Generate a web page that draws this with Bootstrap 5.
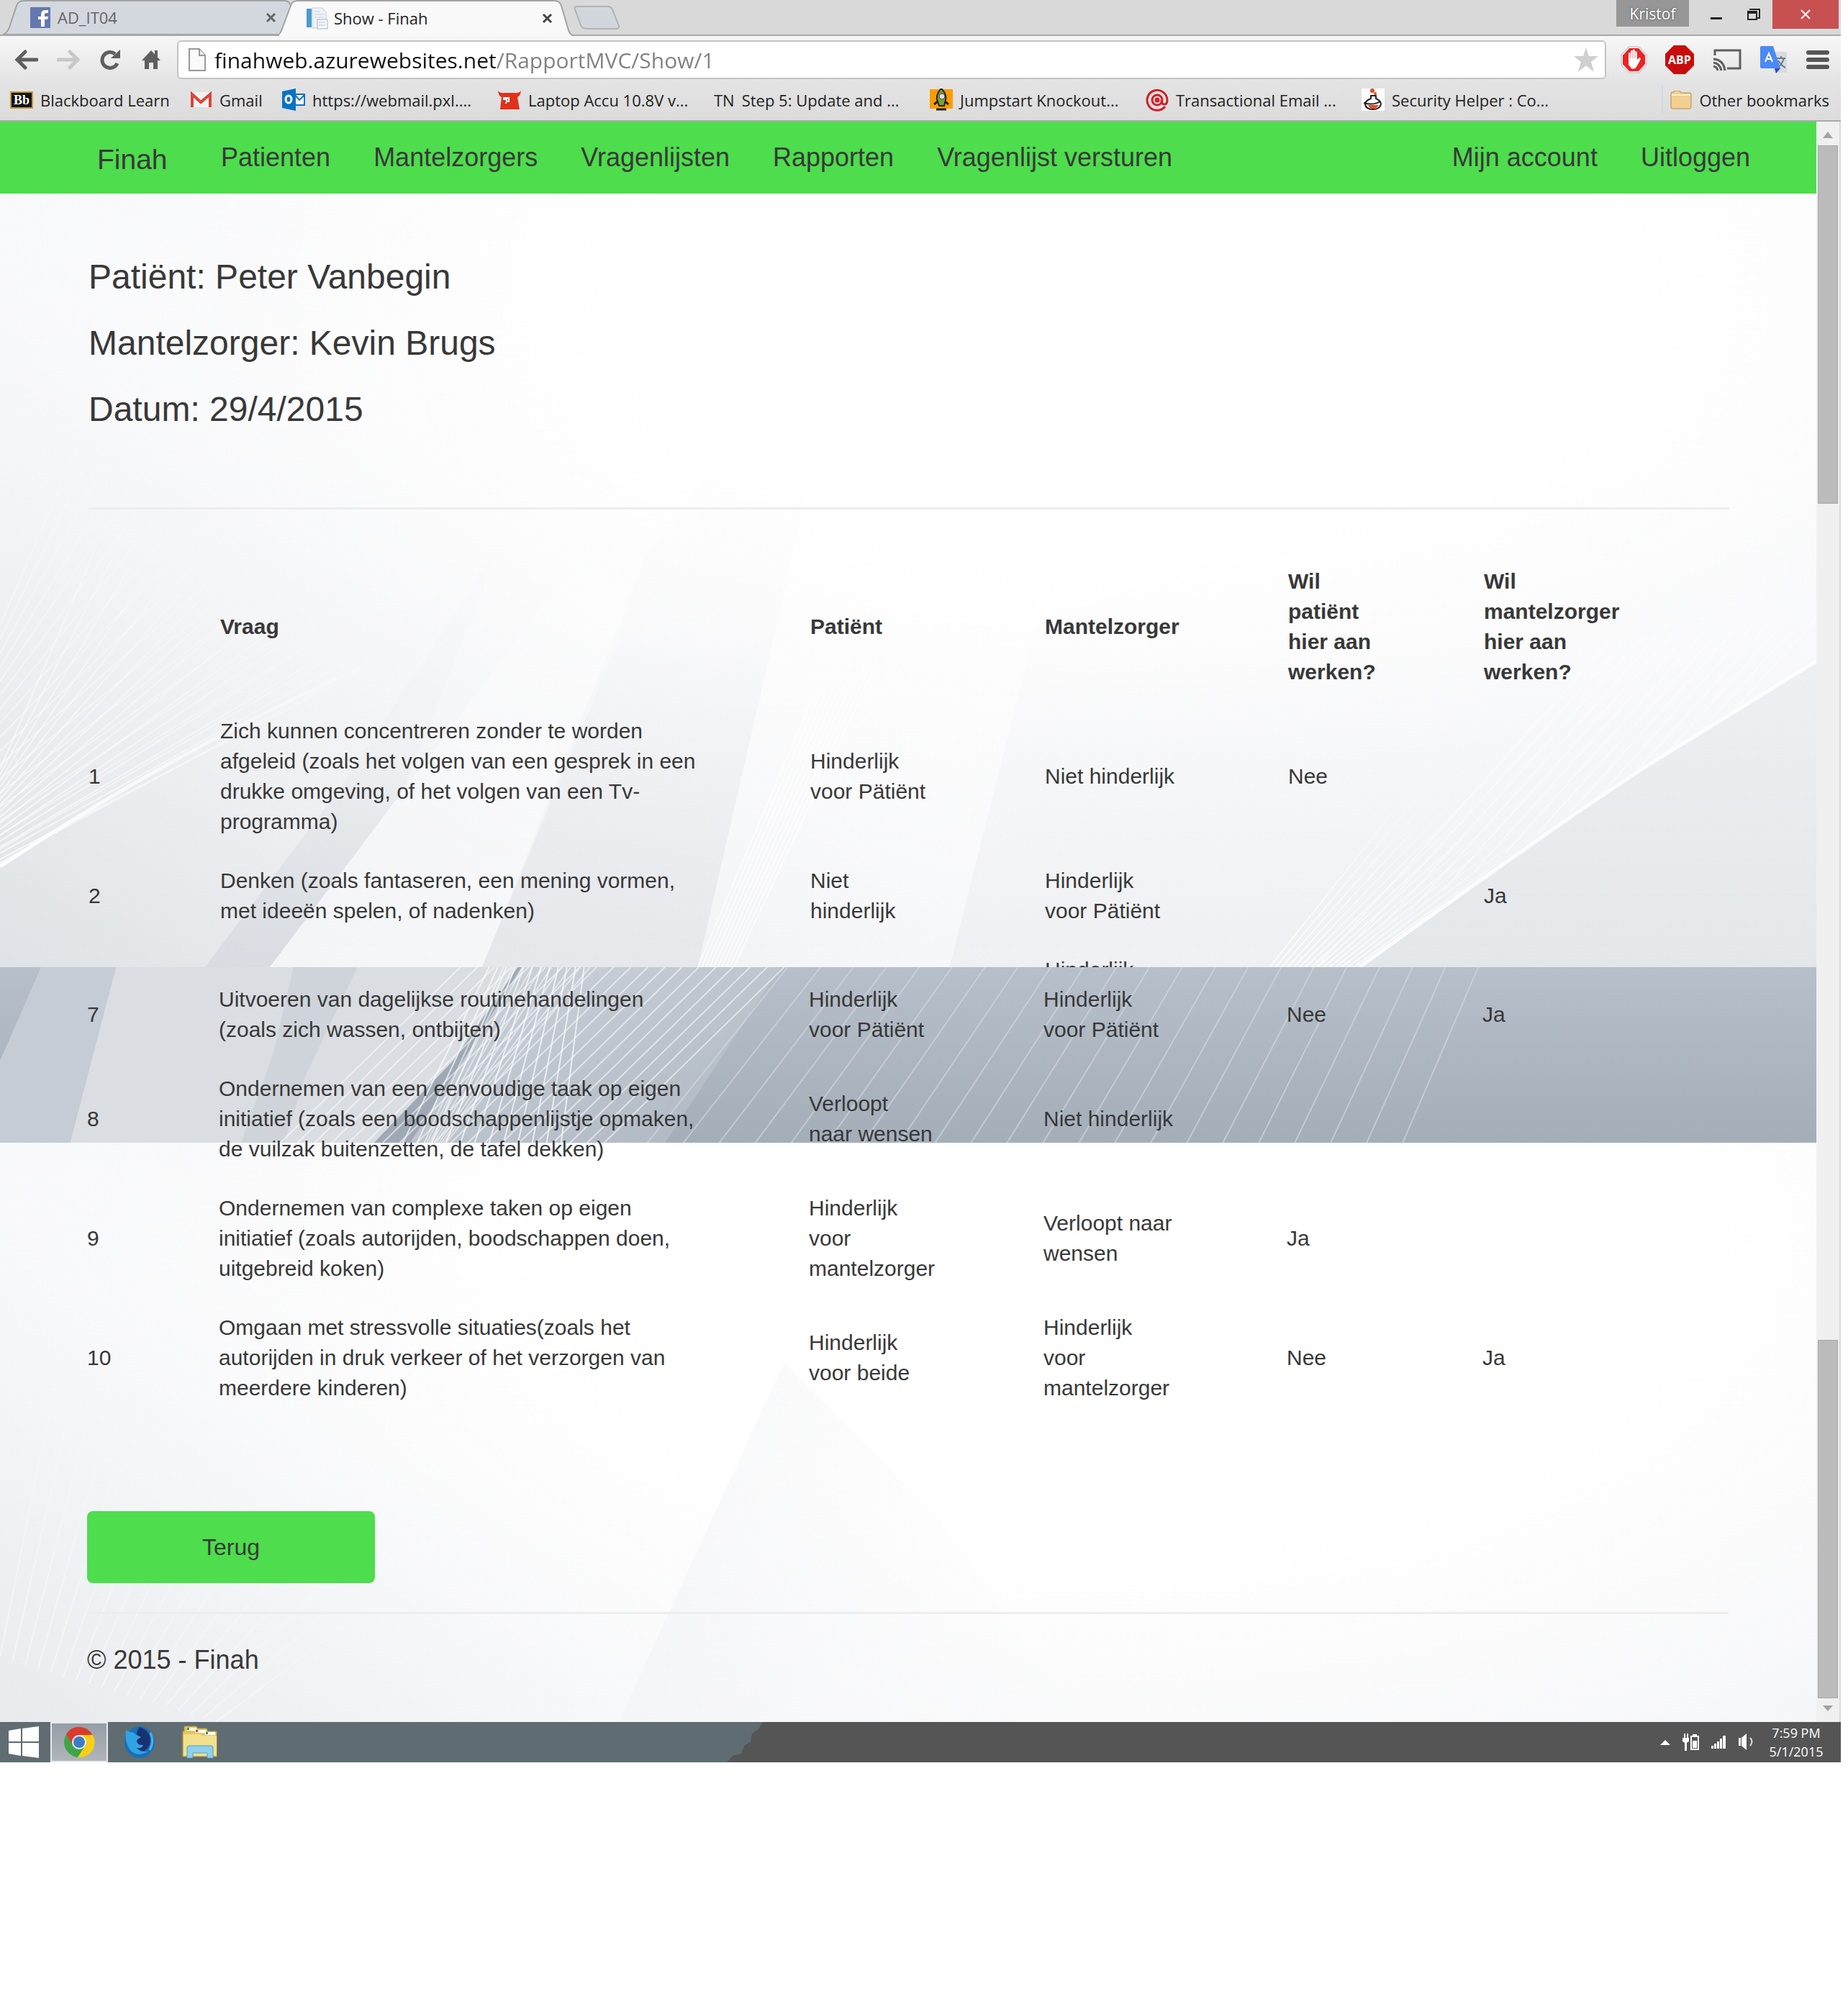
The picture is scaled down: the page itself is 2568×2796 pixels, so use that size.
<!DOCTYPE html>
<html lang="nl">
<head>
<meta charset="utf-8">
<meta name="viewport" content="width=device-width, initial-scale=1">
<title>Show - Finah</title>
<link href="https://cdn.jsdelivr.net/npm/bootstrap@5.3.0/dist/css/bootstrap.min.css" rel="stylesheet">
<style>
:root{--green:#4ddd4d;--ink:#383838;--ui:"Open Sans","Noto Sans",sans-serif}
body{background:#fff;color:var(--ink);font-family:"Liberation Sans",Arial,sans-serif;font-size:30px;line-height:42px;padding-right:10px}
svg{display:block;flex:none}
a{color:inherit;text-decoration:none}
.ui-font{font-family:var(--ui)}
.plain-btn{background:none;border:0;padding:0;color:inherit;line-height:0}

.tab-strip{height:50px;background:#d9d9d9;border-bottom:2px solid #a9a9a9;padding:0 3px 0 4px}
.win-tab{width:408px;height:48px;font-size:22px;line-height:46px;padding:0 28px 0 38px;gap:10px;color:#666}
.win-tab.current{margin-left:-24px;color:#222;height:50px;gap:8px;z-index:2}
.tab-shape{position:absolute;inset:0;width:100%;height:100%;z-index:-1}
.profile-tag{background:#979797;color:#fff;font-size:21px;line-height:34px;height:37px;width:101px;text-shadow:0 0 3px #444}
.win-close{width:92px;height:40px;background:#c75050}

.tool-row{background:linear-gradient(#f7f7f7,#e3e3e3);height:66px;padding:0 16px 0 20px}
.tool-left{width:226px;gap:26px}
.tool-right{width:310px;padding-left:20px}
.omnibox{height:54px;background:#fff;border:2px solid #c3c3c3;border-radius:6px;padding:0 8px 0 14px;gap:12px}
.omnibox input{border:0;outline:0;min-width:0;font-size:30px;line-height:44px;height:48px;padding:0;color:transparent;background:linear-gradient(90deg,#111 391px,#808080 391px);-webkit-background-clip:text;background-clip:text;-webkit-text-fill-color:transparent}
.book-row{background:linear-gradient(#e3e3e3,#dcdcdc);height:53px;border-bottom:2px solid #aaa;padding:0 16px 6px 14px;font-size:22px;line-height:40px;color:#222}
.bookmark{gap:10px;white-space:nowrap;width:300px}
.bookmark.w-first{width:250px}.bookmark.w-short{width:128px}
.other-marks{border-left:2px solid #cfdbe6;padding-left:10px;gap:10px;white-space:nowrap}

.site-nav{background:var(--green);height:100px;padding:0 92px 0 135px;font-size:36px}
.site-nav .brand-name{font-size:39px;width:112px;margin-right:60px;padding-top:6px}
.site-nav ul{gap:60px}
.panel-top{padding-left:123px;padding-right:121px;background:radial-gradient(ellipse 68% 90% at 62% 12%,#fff 40%,#f6f7f9 100%)}
.panel-end{padding:4px 122px 60px 121px;background:radial-gradient(ellipse 70% 90% at 62% 36%,#fff 45%,#f4f5f7 100%)}
.art{position:absolute;left:0;top:0;width:100%;z-index:0}
.panel-top>.art{height:100%}
.panel-end>.art{height:100%}
.panel-end>.dusk{height:244px}
.front{position:relative;z-index:1}
.facts{padding-top:90px}
.facts h2{font-size:48px;line-height:52px;font-weight:400;margin:0 0 40px}
.soft-line{height:3px;background:#ededee;border:0;opacity:1;margin:0}
.facts+.soft-line{margin:110px 0 59px}
.answers{table-layout:fixed;width:100%;border-collapse:collapse}
.answers th,.answers td{padding:20px 148px 20px 0;vertical-align:middle;text-align:left}
.answers .num{width:183px;padding-right:0}
.answers .c-ask{width:820px}.answers .c-pat{width:326px}.answers .c-man{width:338px}.answers .c-wil{width:272px}
.clip{max-height:577px;overflow:hidden}
.btn-back{background:var(--green);color:var(--ink);width:400px;height:100px;font-size:32px;border-radius:8px;border:0;margin:130px 0 40px}
.btn-back:hover{background:#3fcf3f}
.foot{font-size:36px;line-height:52px;margin-top:38px}
.scroll-rail{flex:none;width:34px;background:#f0f0f0;border-right:2px solid #dadada;padding:14px 0;gap:9px}
.thumb{width:28px;height:498px;background:#bbb;border:1px solid #a8a8a8}

.task-row{height:56px;background:#555;color:#fff}
.task-btn{width:80px;height:56px}
.task-btn.active{background:linear-gradient(#959ea6,#b0b5ba);border:2px solid #e8eaec}
.clock{font-size:18px;line-height:26px;width:104px}
.hill{position:absolute;left:0;top:0;width:1060px;height:100%;z-index:0}
</style>
<script src="https://cdn.jsdelivr.net/npm/bootstrap@5.3.0/dist/js/bootstrap.bundle.min.js"></script>
</head>
<body>
<header class="ui-font">
  <div class="tab-strip d-flex align-items-start">
    <div class="win-tab position-relative d-flex align-items-center z-1">
      <svg class="tab-shape" viewBox="0 0 408 48" preserveAspectRatio="none"><path d="M0 48Q6 46 9 38L19 8Q21 1 29 1H392Q398 1 400 8L408 48Z" fill="#d3d8df" stroke="#a3a3a3" stroke-width="2"/></svg>
      <svg width="28" height="29" viewBox="0 0 28 29"><rect width="28" height="29" rx="1" fill="#6478af"/><path d="M15 27V17H11V13H15V10Q15 4 21 4H25V8H22Q20 8 20 10V13H25L24 17H20V27Z" fill="#fff"/></svg>
      <a href="#" class="flex-grow-1">AD_IT04</a>
      <button class="plain-btn" aria-label="Tab sluiten"><svg width="15" height="15" viewBox="0 0 15 15"><path d="M2 2L13 13M13 2L2 13" stroke="#666" stroke-width="3"/></svg></button>
    </div>
    <div class="win-tab current position-relative d-flex align-items-center">
      <svg class="tab-shape" viewBox="0 0 408 50" preserveAspectRatio="none"><path d="M-6 51Q2 48 4 40L16 8Q18 1 26 1H382Q390 1 392 8L402 42Q404 49 412 51Z" fill="#f9f9f9" stroke="#a3a3a3" stroke-width="2"/></svg>
      <svg width="30" height="31" viewBox="0 0 30 31"><rect y="2" width="7" height="26" fill="#4a9bd0"/><path d="M8 1H22L27 7V29H8Z" fill="#eef2f7" stroke="#c4ccd6"/><path d="M11 6H19M11 10H24M11 14H24" stroke="#c7d3df"/><rect x="15" y="17" width="14" height="13" fill="#f4f6f9" stroke="#aab7c6"/><path d="M17 21H26M17 25H26" stroke="#b9c6d6"/></svg>
      <a href="#" class="flex-grow-1">Show - Finah</a>
      <button class="plain-btn" aria-label="Tab sluiten"><svg width="15" height="15" viewBox="0 0 15 15"><path d="M2 2L13 13M13 2L2 13" stroke="#444" stroke-width="3"/></svg></button>
    </div>
    <button class="plain-btn mt-2" aria-label="Nieuw tabblad"><svg width="66" height="34" viewBox="0 0 66 34"><path d="M3 5Q1 1 7 1H48Q53 1 55 5L64 28Q65 32 59 32H20Q13 32 11 27Z" fill="#d1d7dd" stroke="#b2b2b2" stroke-width="2"/></svg></button>
    <div class="ms-auto d-flex align-items-start">
      <button class="plain-btn profile-tag me-4">Kristof</button>
      <button class="plain-btn ms-1 me-4 pt-2" aria-label="Minimaliseren"><svg width="20" height="24" viewBox="0 0 20 24"><rect x="2" y="16" width="16" height="3" fill="#222"/></svg></button>
      <button class="plain-btn mx-2 pt-2" aria-label="Herstellen"><svg width="20" height="24" viewBox="0 0 20 24"><path d="M4 5H18V17H15M2 9V19H14V9Z" fill="none" stroke="#222" stroke-width="2"/><path d="M1 9H15" stroke="#222" stroke-width="4"/></svg></button>
      <button class="plain-btn win-close d-flex align-items-center justify-content-center ms-2" aria-label="Sluiten"><svg width="16" height="14" viewBox="0 0 16 14"><path d="M2 1L14 13M14 1L2 13" stroke="#fff" stroke-width="2"/></svg></button>
    </div>
  </div>
  <div class="tool-row d-flex align-items-center">
    <div class="tool-left d-flex align-items-center">
      <button class="plain-btn" aria-label="Terug"><svg width="33" height="28" viewBox="0 0 33 28"><path d="M15 3L4 14L15 25M5 14H31" fill="none" stroke="#5f5f5f" stroke-width="5" stroke-linecap="round"/></svg></button>
      <button class="plain-btn" aria-label="Vooruit"><svg width="33" height="28" viewBox="0 0 33 28"><path d="M18 3L29 14L18 25M28 14H2" fill="none" stroke="#c8c8c8" stroke-width="5" stroke-linecap="round"/></svg></button>
      <button class="plain-btn" aria-label="Vernieuwen"><svg width="32" height="28" viewBox="0 0 32 28"><path d="M25 19A11 11 0 1 1 22 6" fill="none" stroke="#5f5f5f" stroke-width="5"/><path d="M16 12H29V0Z" fill="#5f5f5f"/></svg></button>
      <button class="plain-btn" aria-label="Startpagina"><svg width="28" height="28" viewBox="0 0 28 28"><path d="M14 1L27 15H23V27H17V18H11V27H5V15H1Z" fill="#5f5f5f"/><rect x="19" y="1" width="4" height="9" fill="#5f5f5f"/></svg></button>
    </div>
    <div class="omnibox flex-grow-1 d-flex align-items-center">
      <svg width="24" height="32" viewBox="0 0 24 32"><path d="M1 1H15L23 10V31H1Z" fill="#fafafa" stroke="#999" stroke-width="2"/><path d="M15 1V10H23" fill="#eee" stroke="#999" stroke-width="2"/></svg>
      <input class="flex-grow-1 ui-font" type="text" aria-label="Adres" value="finahweb.azurewebsites.net/RapportMVC/Show/1">
      <svg width="36" height="36" viewBox="0 0 36 36"><path d="M18 1L22 13H35L25 21L29 35L18 26L7 35L11 21L1 13H14Z" fill="#d0d0d0"/></svg>
    </div>
    <div class="tool-right d-flex align-items-center justify-content-between">
      <svg width="37" height="38" viewBox="0 0 37 38"><path d="M11 1H26L36 12V26L26 37H11L1 26V12Z" fill="#f5f5f5" stroke="#b5b5b5"/><path d="M12 3H25L34 13V25L25 35H12L3 25V13Z" fill="#e22"/><path d="M11 16V10Q12 8 14 10V7Q16 5 17 7V5Q19 4 20 6V8Q22 6 23 9V19L26 16Q29 16 27 20L22 29Q19 33 15 31L11 26Z" fill="#fff"/><path d="M14 10V17M17 8V17M20 8V17" stroke="#e88"/></svg>
      <svg width="40" height="40" viewBox="0 0 40 40"><path d="M12 0H28L40 12V28L28 40H12L0 28V12Z" fill="#c70d0d"/><text x="20" y="26" text-anchor="middle" font-family="Open Sans" font-weight="700" font-size="16" fill="#fff">ABP</text></svg>
      <svg width="40" height="32" viewBox="0 0 40 32"><path d="M3 10V3H38V28H20" fill="none" stroke="#5f5f5f" stroke-width="3"/><path d="M1 25Q6 26 7 31M1 20Q10 21 12 31M1 15Q15 16 17 31" fill="none" stroke="#5f5f5f" stroke-width="3"/></svg>
      <svg width="40" height="40" viewBox="0 0 40 40"><path d="M14 9H36Q38 9 38 11V38H20Z" fill="#d9dcdf"/><path d="M24 18H36M30 15V18M34 18Q31 28 24 31M26 21Q30 28 36 31" fill="none" stroke="#607d8b" stroke-width="2"/><path d="M3 1H19L29 32H3Q1 32 1 30V3Q1 1 3 1Z" fill="#4a8af4"/><path d="M21 32H29L23 39Z" fill="#3b49b0"/><path d="M8 23L13 11L18 23M10 19H16" fill="none" stroke="#fff" stroke-width="2"/></svg>
      <button class="plain-btn" aria-label="Menu"><svg width="32" height="28" viewBox="0 0 32 28"><path d="M3 4H29M3 14H29M3 24H29" stroke="#565656" stroke-width="6" stroke-linecap="round"/></svg></button>
    </div>
  </div>
  <nav class="book-row d-flex align-items-center" aria-label="Bladwijzers">
    <a href="#" class="bookmark w-first d-flex align-items-center"><svg width="32" height="24" viewBox="0 0 32 24"><rect x="1" y="1" width="30" height="22" fill="#111" stroke="#c29a2e" stroke-width="2"/><text x="16" y="18" text-anchor="middle" font-family="Liberation Serif" font-weight="700" font-size="18" fill="#fff">Bb</text></svg>Blackboard Learn</a>
    <a href="#" class="bookmark w-short d-flex align-items-center"><svg width="31" height="23" viewBox="0 0 31 23"><rect x="2" y="1" width="27" height="21" fill="#f1f1f1"/><path d="M3 22V4L15 15L28 4V22" fill="none" stroke="#d9453b" stroke-width="4"/></svg>Gmail</a>
    <a href="#" class="bookmark d-flex align-items-center"><svg width="32" height="31" viewBox="0 0 32 31"><rect x="17" y="8" width="14" height="15" fill="#fff" stroke="#0a72c6" stroke-width="2"/><path d="M18 9L24 16L31 9" fill="none" stroke="#0a72c6" stroke-width="2"/><path d="M0 4L19 0V31L0 27Z" fill="#0a72c6"/><ellipse cx="9" cy="15" rx="4" ry="5" fill="none" stroke="#fff" stroke-width="3"/></svg>https://webmail.pxl....</a>
    <a href="#" class="bookmark d-flex align-items-center"><svg width="32" height="28" viewBox="0 0 32 28"><path d="M0 1Q3 5 9 4H23Q29 5 32 1Q31 9 27 10L30 27H3L5 10Q1 9 0 1Z" fill="#e1301b"/><path d="M8 11H15V16H12V13H8ZM11 17V19" fill="none" stroke="#fff" stroke-width="2"/></svg>Laptop Accu 10.8V v...</a>
    <a href="#" class="bookmark d-flex align-items-center"><span>TN</span>Step 5: Update and ...</a>
    <a href="#" class="bookmark d-flex align-items-center"><svg width="32" height="31" viewBox="0 0 32 31"><rect y="1" width="32" height="27" fill="#ff9c00"/><path d="M16 0Q24 8 22 16L20 24H13L10 15Q9 7 16 0Z" fill="#7aa52b" stroke="#222" stroke-width="2"/><circle cx="17" cy="11" r="4" fill="#ddd" stroke="#444"/><path d="M9 29H23M6 22L11 18M26 22L21 18" stroke="#222" stroke-width="3"/></svg>Jumpstart Knockout...</a>
    <a href="#" class="bookmark d-flex align-items-center"><svg width="32" height="32" viewBox="0 0 32 32" fill="none" stroke="#cf2027" stroke-width="3"><path d="M27 25A14 14 0 1 1 30 16Q30 22 26 22Q22 22 22 16"/><circle cx="16" cy="16" r="7"/><circle cx="16" cy="16" r="2"/></svg>Transactional Email ...</a>
    <a href="#" class="bookmark d-flex align-items-center"><svg width="32" height="31" viewBox="0 0 32 31"><rect width="32" height="31" fill="#fff"/><path d="M13 10V14Q5 17 5 22Q6 29 16 29Q25 29 27 22Q27 17 20 14V10M12 10H21M3 20Q16 24 26 18" fill="none" stroke="#222" stroke-width="2"/><path d="M9 23H24Q21 28 16 28Q11 28 9 23Z" fill="#e8491d"/><circle cx="15" cy="3" r="3" fill="#e8491d"/><circle cx="19" cy="7" r="2" fill="#e8491d"/></svg>Security Helper : Co...</a>
    <a href="#" class="other-marks ms-auto d-flex align-items-center"><svg width="30" height="26" viewBox="0 0 30 26"><path d="M1 4Q1 2 3 2H5L6 0H13L15 3H27Q29 3 29 5V23Q29 25 27 25H3Q1 25 1 23Z" fill="#f3cf91" stroke="#b68a4a"/><path d="M2 6H28" stroke="#fff0c9" stroke-width="2"/></svg>Other bookmarks</a>
  </nav>
</header>

<div class="d-flex">
  <div class="flex-grow-1">
    <nav class="site-nav d-flex align-items-center">
      <a class="brand-name" href="#">Finah</a>
      <ul class="list-unstyled d-flex mb-0">
        <li><a href="#">Patienten</a></li><li><a href="#">Mantelzorgers</a></li><li><a href="#">Vragenlijsten</a></li><li><a href="#">Rapporten</a></li><li><a href="#">Vragenlijst versturen</a></li>
      </ul>
      <ul class="list-unstyled d-flex mb-0 ms-auto"><li><a href="#">Mijn account</a></li><li><a href="#">Uitloggen</a></li></ul>
    </nav>

    <section class="panel-top position-relative overflow-hidden">
      <svg class="art" viewBox="0 0 2525 1075" preserveAspectRatio="none" aria-hidden="true">
        <defs>
          <linearGradient id="gl" x1="0" y1="1" x2=".55" y2=".3"><stop offset="0" stop-color="#dfe2e6"/><stop offset=".5" stop-color="#f2f3f5"/><stop offset="1" stop-color="#fff" stop-opacity="0"/></linearGradient>
          <linearGradient id="gv" x1="0" y1="0" x2="0" y2="1"><stop offset="0" stop-color="#e3e5e9" stop-opacity="0"/><stop offset=".4" stop-color="#e3e5e9" stop-opacity=".1"/><stop offset="1" stop-color="#e3e5e9" stop-opacity=".8"/></linearGradient>
          <linearGradient id="gr" x1="0" y1="0" x2="0" y2="1"><stop offset="0" stop-color="#eeeff2"/><stop offset="1" stop-color="#e4e7e9"/></linearGradient>
          <linearGradient id="gd" x1="0" y1="0" x2="0" y2="1"><stop offset="0" stop-color="#d6dae0" stop-opacity="0"/><stop offset=".5" stop-color="#d6dae0" stop-opacity=".12"/><stop offset="1" stop-color="#d6dae0" stop-opacity=".85"/></linearGradient>
          <linearGradient id="gw" x1="0" y1="0" x2="0" y2="1"><stop offset="0" stop-color="#fff" stop-opacity="0"/><stop offset="1" stop-color="#fff" stop-opacity=".55"/></linearGradient>
          <linearGradient id="sl" gradientUnits="userSpaceOnUse" x1="0" y1="930" x2="420" y2="420"><stop offset="0" stop-color="#fff"/><stop offset="1" stop-color="#fff" stop-opacity="0"/></linearGradient>
          <linearGradient id="sr" gradientUnits="userSpaceOnUse" x1="1850" y1="1075" x2="1960" y2="780"><stop offset="0" stop-color="#fff"/><stop offset="1" stop-color="#fff" stop-opacity="0"/></linearGradient>
        </defs>
        <rect width="1389" height="1075" fill="url(#gl)"/>
        <path d="M1050 300L1130 380L970 1075H670L900 500Z" fill="url(#gv)"/>
        <path d="M285 1075L470 830L700 480L560 830L375 1075Z" fill="url(#gd)"/>
        <path d="M375 1075L560 830L960 300L860 620L670 1075Z" fill="url(#gw)"/>
        <path d="M1320 1075L1440 600L1800 460L2525 350V1075Z" fill="url(#gv)" opacity=".5"/>
        <path d="M1890 1075Q2130 900 2290 795L2525 650V1075Z" fill="url(#gr)"/>
        <path d="M0 935Q250 770 500 660" fill="none" stroke="url(#sl)" stroke-width="5"/>
        <path d="M1890 1075Q2130 900 2290 795L2525 650" fill="none" stroke="#fff" stroke-width="5" opacity=".8"/>
        <g data-fan="18,0,600,0,930,160,230,480,670" stroke="url(#sl)" stroke-width="2" opacity=".6"></g>
        <g data-fan="16,0,800,0,925,130,500,490,670" stroke="url(#sl)" stroke-width="2" opacity=".7"></g>
        <g data-fan="10,970,1075,1020,1075,1130,700,1220,650" stroke="#fff" stroke-width="2" opacity=".7"></g>
        <g data-fan="16,1765,1075,1890,1075,2000,780,2290,795" stroke="url(#sr)" stroke-width="2" opacity=".8"></g>
        <g data-fan="14,1830,1075,2400,730,2240,620,2525,590" stroke="#fff" stroke-width="2" opacity=".45"></g>
      </svg>
      <div class="front">
        <div class="facts">
          <h2>Patiënt: Peter Vanbegin</h2>
          <h2>Mantelzorger: Kevin Brugs</h2>
          <h2>Datum: 29/4/2015</h2>
        </div>
        <hr class="soft-line">
        <div class="clip">
          <table class="answers">
            <thead><tr><th class="num"></th><th class="c-ask">Vraag</th><th class="c-pat">Patiënt</th><th class="c-man">Mantelzorger</th><th class="c-wil">Wil patiënt hier aan werken?</th><th>Wil mantelzorger hier aan werken?</th></tr></thead>
            <tbody>
              <tr><td class="num">1</td><td>Zich kunnen concentreren zonder te worden afgeleid (zoals het volgen van een gesprek in een drukke omgeving, of het volgen van een Tv-programma)</td><td>Hinderlijk<br>voor Pätiënt</td><td>Niet hinderlijk</td><td>Nee</td><td></td></tr>
              <tr><td class="num">2</td><td>Denken (zoals fantaseren, een mening vormen, met ideeën spelen, of nadenken)</td><td>Niet<br>hinderlijk</td><td>Hinderlijk<br>voor Pätiënt</td><td></td><td>Ja</td></tr>
              <tr><td class="num"></td><td></td><td></td><td>Hinderlijk</td><td></td><td></td></tr>
            </tbody>
          </table>
        </div>
      </div>
    </section>

    <section class="panel-end position-relative overflow-hidden">
      <svg class="art" viewBox="0 0 2525 1050" preserveAspectRatio="none" aria-hidden="true">
        <defs><linearGradient id="gb" x1="0" y1="1" x2=".6" y2=".5"><stop offset="0" stop-color="#e8eaed"/><stop offset=".5" stop-color="#f5f6f8"/><stop offset="1" stop-color="#fff" stop-opacity="0"/></linearGradient>
        <linearGradient id="gs" x1="0" y1="0" x2="1" y2="0"><stop offset="0" stop-color="#f3f4f6"/><stop offset="1" stop-color="#f6f7f9" stop-opacity="0"/></linearGradient>
        <linearGradient id="sb" gradientUnits="userSpaceOnUse" x1="0" y1="1050" x2="260" y2="650"><stop offset="0" stop-color="#fff"/><stop offset="1" stop-color="#fff" stop-opacity="0"/></linearGradient></defs>
        <rect y="244" width="1389" height="806" fill="url(#gb)"/>
        <path d="M1090 550L860 1050H1500L1300 760Z" fill="url(#gs)" opacity=".7"/>
        <g data-fan="18,0,960,300,1050,80,560,500,900" stroke="url(#sb)" stroke-width="2" opacity=".6"></g>
      </svg>
      <svg class="art dusk" viewBox="0 0 2525 244" preserveAspectRatio="none" aria-hidden="true">
        <defs><linearGradient id="dk" x1="0" y1="0" x2="0" y2="1"><stop offset="0" stop-color="#b6bfca"/><stop offset="1" stop-color="#a4aeb9"/></linearGradient>
        <linearGradient id="dm" x1="0" y1="0" x2="1" y2="1"><stop offset="0" stop-color="#cfd5dc"/><stop offset="1" stop-color="#adb6c1"/></linearGradient></defs>
        <rect width="2525" height="244" fill="url(#dk)"/>
        <path d="M720 0H1085L925 244H520Z" fill="url(#dm)"/>
        <path d="M161 0H720L630 130L520 244H97Z" fill="#dadde2"/>
        <path d="M408 0H497L425 150L395 244H335L380 120Z" fill="#cfd4da"/>
        <path d="M57 0H161L97 244H0V130Z" fill="#c5ccd5"/>
        <path d="M720 0L630 130L520 244H570L650 120L725 0Z" fill="#9fa9b5"/>
        <g data-fan="12,680,0,812,0,560,244,780,244" stroke="#fff" stroke-width="2" opacity=".7"></g>
        <g data-fan="20,640,0,1090,0,390,244,840,244" stroke="#fff" stroke-width="2" opacity=".55"></g>
        <g data-fan="10,700,0,820,0,590,244,620,244" stroke="#fff" stroke-width="2" opacity=".5"></g>
        <g data-fan="22,1095,0,2055,0,900,244,1950,244" stroke="#d5dbe3" stroke-width="2" opacity=".6"></g>
      </svg>
      <div class="front">
        <table class="answers">
          <tbody>
            <tr><td class="num">7</td><td class="c-ask">Uitvoeren van dagelijkse routinehandelingen (zoals zich wassen, ontbijten)</td><td class="c-pat">Hinderlijk<br>voor Pätiënt</td><td class="c-man">Hinderlijk<br>voor Pätiënt</td><td class="c-wil">Nee</td><td>Ja</td></tr>
            <tr><td class="num">8</td><td>Ondernemen van een eenvoudige taak op eigen initiatief (zoals een boodschappenlijstje opmaken, de vuilzak buitenzetten, de tafel dekken)</td><td>Verloopt<br>naar wensen</td><td>Niet hinderlijk</td><td></td><td></td></tr>
            <tr><td class="num">9</td><td>Ondernemen van complexe taken op eigen initiatief (zoals autorijden, boodschappen doen, uitgebreid koken)</td><td>Hinderlijk<br>voor<br>mantelzorger</td><td>Verloopt naar<br>wensen</td><td>Ja</td><td></td></tr>
            <tr><td class="num">10</td><td>Omgaan met stressvolle situaties(zoals het autorijden in druk verkeer of het verzorgen van meerdere kinderen)</td><td>Hinderlijk<br>voor beide</td><td>Hinderlijk<br>voor<br>mantelzorger</td><td>Nee</td><td>Ja</td></tr>
          </tbody>
        </table>
        <button type="button" class="btn btn-back d-block">Terug</button>
        <hr class="soft-line">
        <footer class="foot">© 2015 - Finah</footer>
      </div>
    </section>
  </div>
  <div class="scroll-rail d-flex flex-column align-items-center" aria-hidden="true">
    <svg width="16" height="10" viewBox="0 0 16 10"><path d="M8 0L15 9H1Z" fill="#a3a3a3"/></svg>
    <div class="thumb"></div>
    <div class="flex-grow-1"></div>
    <div class="thumb"></div>
    <svg width="16" height="10" viewBox="0 0 16 10"><path d="M8 9L15 1H1Z" fill="#a3a3a3"/></svg>
  </div>
</div>

<footer class="task-row ui-font position-relative d-flex align-items-center">
  <svg class="hill" viewBox="0 0 1060 56" preserveAspectRatio="none"><path d="M0 0H1060L1054 10L1045 16L1043 28L1035 32L1030 44L1018 47L1010 56H0Z" fill="#5f6c72"/></svg>
  <div class="front d-flex align-items-center gap-1">
    <button class="plain-btn ps-2 pe-2 me-1" aria-label="Start"><svg width="46" height="44" viewBox="0 0 46 44"><path d="M4 6L21 3V21H4ZM23 3L46 0V21H23ZM4 23H21V41L4 38ZM23 23H46V44L23 41Z" fill="#fff"/></svg></button>
    <button class="plain-btn task-btn active d-flex align-items-center justify-content-center" aria-label="Chrome"><svg width="44" height="44" viewBox="0 0 44 44"><circle cx="22" cy="22" r="21" fill="#3fa648"/><path d="M22 22L4 11A21 21 0 0 1 41 13Z" fill="#dc3a2e"/><path d="M22 12H41A21 21 0 0 1 20 43L31 26Z" fill="#f9cf16"/><path d="M4 11L13 26L22 12Z" fill="#dc3a2e"/><circle cx="22" cy="22" r="10" fill="#f4f4f4"/><circle cx="22" cy="22" r="8" fill="#3c7dc4"/></svg></button>
    <button class="plain-btn task-btn d-flex align-items-center justify-content-center" aria-label="Firefox"><svg width="44" height="46" viewBox="0 0 44 46"><ellipse cx="22" cy="23" rx="21" ry="22" fill="#1670b8"/><path d="M22 2Q40 8 36 26Q33 37 20 36Q12 32 14 22L20 16Q15 12 22 2Z" fill="#1b3272"/><path d="M3 6Q1 22 8 33Q18 45 34 36Q24 38 18 31Q26 32 27 27Q18 28 18 20L24 16Q17 13 12 9Q8 10 3 6Z" fill="#31a3e4"/><path d="M37 10Q43 22 36 34" fill="none" stroke="#49b3ea" stroke-width="3"/></svg></button>
    <button class="plain-btn task-btn d-flex align-items-center justify-content-center" aria-label="Verkenner"><svg width="50" height="46" viewBox="0 0 50 46"><path d="M3 1H20L22 4H34L36 8H48V43H1V8H3Z" fill="#e3c65e" stroke="#b8983a"/><path d="M7 3H20V7H7ZM18 6H33V10H18ZM32 9H46V13H32Z" fill="#fff"/><path d="M7 3H10V6H7Z" fill="#3a9e47"/><path d="M19 6H22V9H19Z" fill="#d33"/><path d="M33 9H36V12H33Z" fill="#28a"/><path d="M2 12H25L28 14H48V42H2Z" fill="#f3e08a"/><path d="M7 45V31Q7 28 10 28H40Q43 28 43 31V45H35V38H15V45Z" fill="#8fd0ec" stroke="#4aa3cc"/></svg></button>
  </div>
  <div class="front ms-auto d-flex align-items-center">
    <svg width="16" height="9" viewBox="0 0 16 9" class="me-3"><path d="M8 1L15 8H1Z" fill="#fff"/></svg>
    <svg width="24" height="24" viewBox="0 0 24 24" class="me-3"><path d="M3 0V6M7 0V6" stroke="#fff" stroke-width="2"/><path d="M0 6H9V11L6 13V24H3V13L0 11Z" fill="#fff"/><path d="M12 4H22V22H12Z" fill="none" stroke="#fff" stroke-width="2"/><rect x="14" y="1" width="6" height="3" fill="#fff"/><rect x="14" y="10" width="6" height="10" fill="#fff"/></svg>
    <svg width="22" height="20" viewBox="0 0 22 20" class="me-3"><path d="M0 15H3V19H0ZM4 12H7V19H4ZM8 9H11V19H8ZM12 5H15V19H12ZM16 1H20V19H16Z" fill="#fff"/></svg>
    <svg width="22" height="24" viewBox="0 0 22 24" class="me-2"><path d="M0 6H3V17H0ZM4 6L11 0V23L4 17Z" fill="#fff"/><path d="M16 6Q21 11 16 17" fill="none" stroke="#ddd" stroke-width="2"/></svg>
    <div class="clock text-center me-2 pe-1">7:59 PM<br>5/1/2015</div>
  </div>
</footer>
<script>
// Fills each fan group with evenly spread strands between two end segments.
document.querySelectorAll('[data-fan]').forEach(function (g) {
  var v = g.dataset.fan.split(',').map(Number), n = v[0];
  for (var i = 0; i < n; i++) {
    var t = i / (n - 1), l = document.createElementNS('http://www.w3.org/2000/svg', 'line');
    l.setAttribute('x1', v[1] + (v[3] - v[1]) * t);
    l.setAttribute('y1', v[2] + (v[4] - v[2]) * t);
    l.setAttribute('x2', v[5] + (v[7] - v[5]) * t);
    l.setAttribute('y2', v[6] + (v[8] - v[6]) * t);
    g.appendChild(l);
  }
});
</script>
</body>
</html>
